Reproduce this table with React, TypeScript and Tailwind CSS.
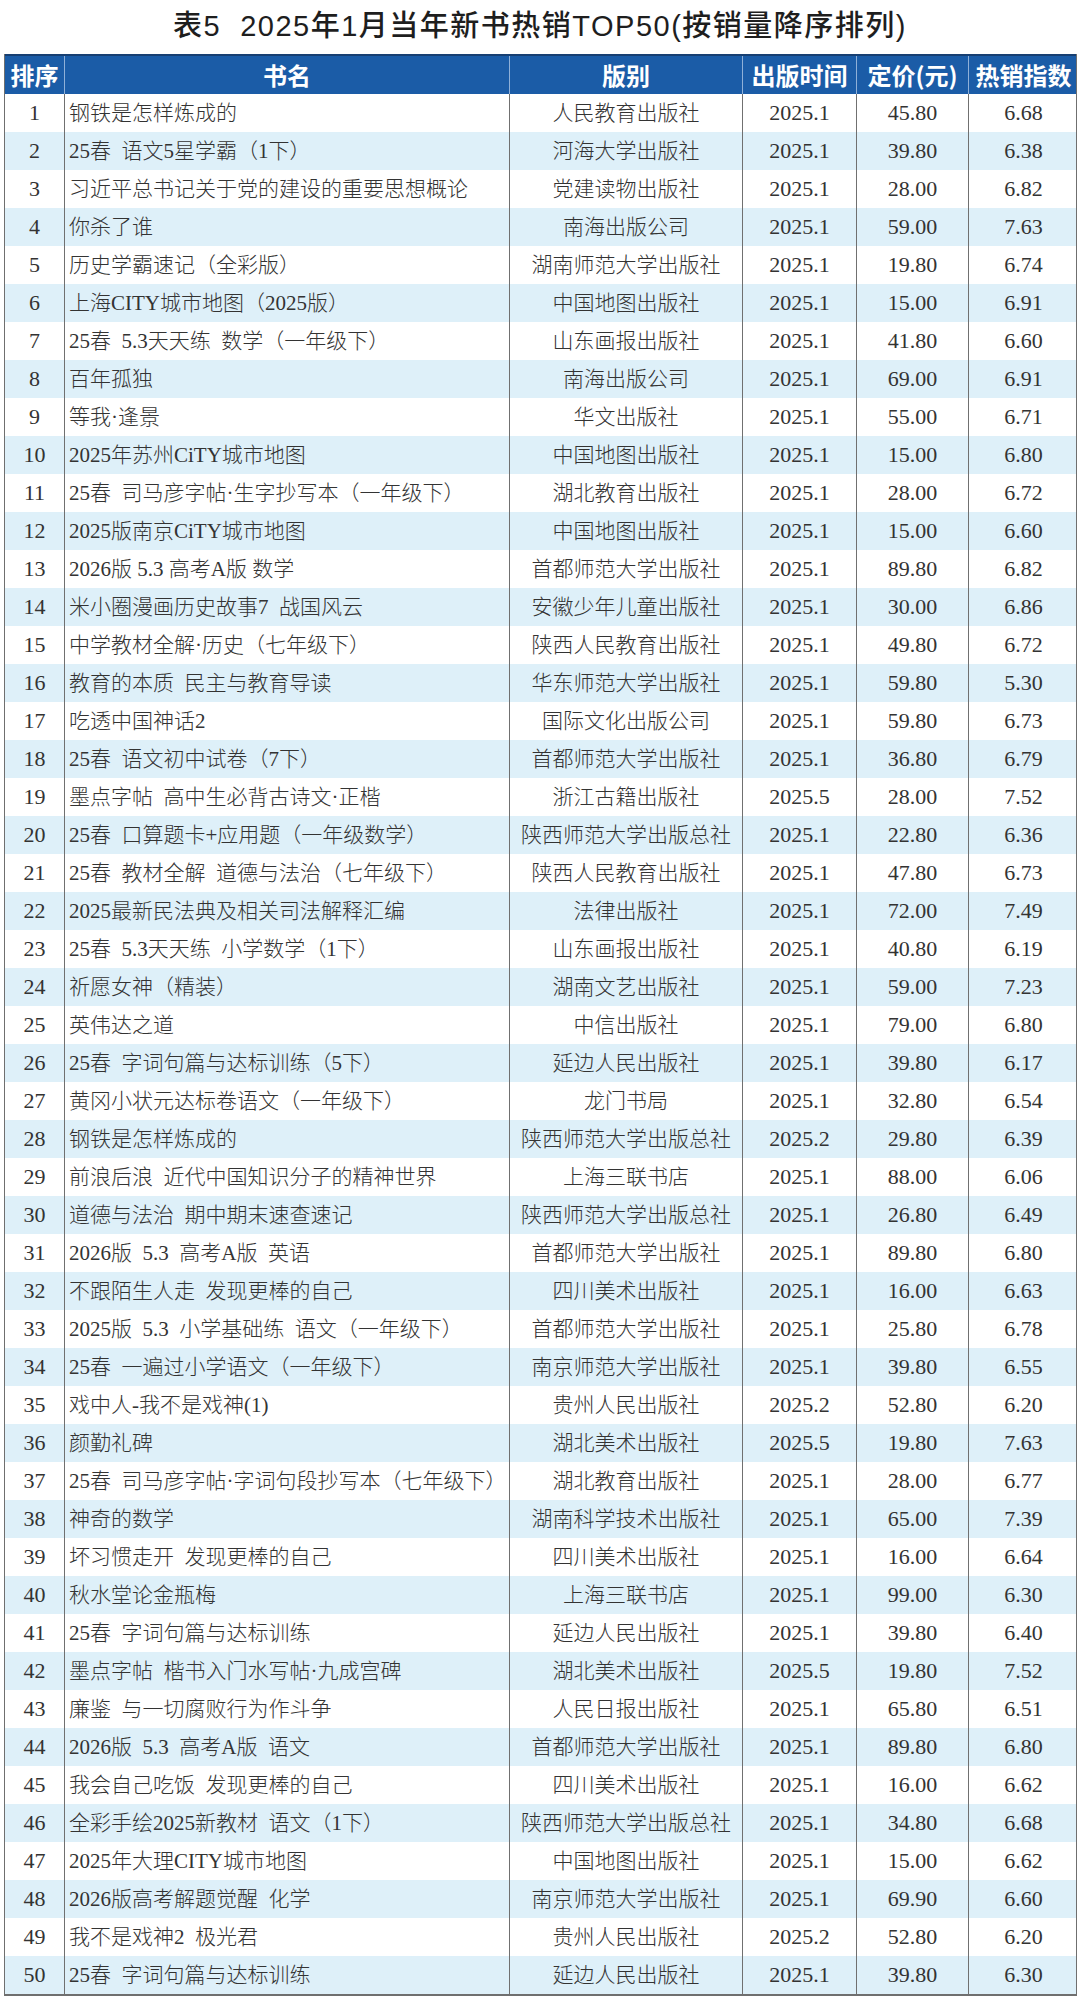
import React from 'react';

type Row = [string, string, string, string, string];

const rows: Row[] = [
  ['钢铁是怎样炼成的', '人民教育出版社', '2025.1', '45.80', '6.68'],
  ['25春  语文5星学霸（1下）', '河海大学出版社', '2025.1', '39.80', '6.38'],
  ['习近平总书记关于党的建设的重要思想概论', '党建读物出版社', '2025.1', '28.00', '6.82'],
  ['你杀了谁', '南海出版公司', '2025.1', '59.00', '7.63'],
  ['历史学霸速记（全彩版）', '湖南师范大学出版社', '2025.1', '19.80', '6.74'],
  ['上海CITY城市地图（2025版）', '中国地图出版社', '2025.1', '15.00', '6.91'],
  ['25春  5.3天天练  数学（一年级下）', '山东画报出版社', '2025.1', '41.80', '6.60'],
  ['百年孤独', '南海出版公司', '2025.1', '69.00', '6.91'],
  ['等我·逢景', '华文出版社', '2025.1', '55.00', '6.71'],
  ['2025年苏州CiTY城市地图', '中国地图出版社', '2025.1', '15.00', '6.80'],
  ['25春  司马彦字帖·生字抄写本（一年级下）', '湖北教育出版社', '2025.1', '28.00', '6.72'],
  ['2025版南京CiTY城市地图', '中国地图出版社', '2025.1', '15.00', '6.60'],
  ['2026版 5.3 高考A版 数学', '首都师范大学出版社', '2025.1', '89.80', '6.82'],
  ['米小圈漫画历史故事7  战国风云', '安徽少年儿童出版社', '2025.1', '30.00', '6.86'],
  ['中学教材全解·历史（七年级下）', '陕西人民教育出版社', '2025.1', '49.80', '6.72'],
  ['教育的本质  民主与教育导读', '华东师范大学出版社', '2025.1', '59.80', '5.30'],
  ['吃透中国神话2', '国际文化出版公司', '2025.1', '59.80', '6.73'],
  ['25春  语文初中试卷（7下）', '首都师范大学出版社', '2025.1', '36.80', '6.79'],
  ['墨点字帖  高中生必背古诗文·正楷', '浙江古籍出版社', '2025.5', '28.00', '7.52'],
  ['25春  口算题卡+应用题（一年级数学）', '陕西师范大学出版总社', '2025.1', '22.80', '6.36'],
  ['25春  教材全解  道德与法治（七年级下）', '陕西人民教育出版社', '2025.1', '47.80', '6.73'],
  ['2025最新民法典及相关司法解释汇编', '法律出版社', '2025.1', '72.00', '7.49'],
  ['25春  5.3天天练  小学数学（1下）', '山东画报出版社', '2025.1', '40.80', '6.19'],
  ['祈愿女神（精装）', '湖南文艺出版社', '2025.1', '59.00', '7.23'],
  ['英伟达之道', '中信出版社', '2025.1', '79.00', '6.80'],
  ['25春  字词句篇与达标训练（5下）', '延边人民出版社', '2025.1', '39.80', '6.17'],
  ['黄冈小状元达标卷语文（一年级下）', '龙门书局', '2025.1', '32.80', '6.54'],
  ['钢铁是怎样炼成的', '陕西师范大学出版总社', '2025.2', '29.80', '6.39'],
  ['前浪后浪  近代中国知识分子的精神世界', '上海三联书店', '2025.1', '88.00', '6.06'],
  ['道德与法治  期中期末速查速记', '陕西师范大学出版总社', '2025.1', '26.80', '6.49'],
  ['2026版  5.3  高考A版  英语', '首都师范大学出版社', '2025.1', '89.80', '6.80'],
  ['不跟陌生人走  发现更棒的自己', '四川美术出版社', '2025.1', '16.00', '6.63'],
  ['2025版  5.3  小学基础练  语文（一年级下）', '首都师范大学出版社', '2025.1', '25.80', '6.78'],
  ['25春  一遍过小学语文（一年级下）', '南京师范大学出版社', '2025.1', '39.80', '6.55'],
  ['戏中人-我不是戏神(1)', '贵州人民出版社', '2025.2', '52.80', '6.20'],
  ['颜勤礼碑', '湖北美术出版社', '2025.5', '19.80', '7.63'],
  ['25春  司马彦字帖·字词句段抄写本（七年级下）', '湖北教育出版社', '2025.1', '28.00', '6.77'],
  ['神奇的数学', '湖南科学技术出版社', '2025.1', '65.00', '7.39'],
  ['坏习惯走开  发现更棒的自己', '四川美术出版社', '2025.1', '16.00', '6.64'],
  ['秋水堂论金瓶梅', '上海三联书店', '2025.1', '99.00', '6.30'],
  ['25春  字词句篇与达标训练', '延边人民出版社', '2025.1', '39.80', '6.40'],
  ['墨点字帖  楷书入门水写帖·九成宫碑', '湖北美术出版社', '2025.5', '19.80', '7.52'],
  ['廉鉴  与一切腐败行为作斗争', '人民日报出版社', '2025.1', '65.80', '6.51'],
  ['2026版  5.3  高考A版  语文', '首都师范大学出版社', '2025.1', '89.80', '6.80'],
  ['我会自己吃饭  发现更棒的自己', '四川美术出版社', '2025.1', '16.00', '6.62'],
  ['全彩手绘2025新教材  语文（1下）', '陕西师范大学出版总社', '2025.1', '34.80', '6.68'],
  ['2025年大理CITY城市地图', '中国地图出版社', '2025.1', '15.00', '6.62'],
  ['2026版高考解题觉醒  化学', '南京师范大学出版社', '2025.1', '69.90', '6.60'],
  ['我不是戏神2  极光君', '贵州人民出版社', '2025.2', '52.80', '6.20'],
  ['25春  字词句篇与达标训练', '延边人民出版社', '2025.1', '39.80', '6.30'],
];

const headers = ['排序', '书名', '版别', '出版时间', '定价(元)', '热销指数'];
const cols = 'grid grid-cols-[59px_445px_233px_114px_112px_110px]';

export default function App() {
  return (
    <div className="w-[1080px] bg-white pb-[4px]">
      {/* Title */}
      <div className="h-[54px] flex items-center justify-center pb-[2px]">
        <h1 className="text-[29px] leading-none font-medium text-[#1e1e1e] tracking-[1.5px] whitespace-pre font-['Liberation_Sans','Noto_Sans_CJK_SC',sans-serif]">
          表5  2025年1月当年新书热销TOP50(按销量降序排列)
        </h1>
      </div>

      <div className="ml-[4px] w-[1073px] border-l-[1.5px] border-r border-b-2 border-[#6f6f6f]">
        {/* Header */}
        <div className={`${cols} h-[40px] bg-[#1b5ca7] border-t-2 border-[#173f72]`}>
          {headers.map((h, i) => (
            <div
              key={h}
              className={`flex items-center justify-center text-white text-[24px] font-bold leading-none font-['Noto_Sans_CJK_SC',sans-serif] ${
                i > 0 ? 'border-l border-[#8fb0d8]' : ''
              }`}
            >
              {h}
            </div>
          ))}
        </div>

        {/* Body */}
        {rows.map((r, idx) => (
          <div
            key={idx}
            className={`${cols} h-[38px] text-[21px] leading-none text-[#333333] font-light font-['Liberation_Serif','Noto_Sans_CJK_SC',serif] ${
              idx % 2 === 1 ? 'bg-[#def0f9]' : 'bg-white'
            }`}
          >
            <div className="flex items-center justify-center text-[22px]">{idx + 1}</div>
            <div className="flex items-center pl-[4px] border-l border-[#707070] whitespace-pre overflow-hidden">
              {r[0]}
            </div>
            <div className="flex items-center justify-center border-l border-[#707070] whitespace-nowrap">
              {r[1]}
            </div>
            <div className="flex items-center justify-center border-l border-[#707070] text-[22px]">{r[2]}</div>
            <div className="flex items-center justify-center border-l border-[#707070] text-[22px]">{r[3]}</div>
            <div className="flex items-center justify-center border-l border-[#707070] text-[22px]">{r[4]}</div>
          </div>
        ))}
      </div>
    </div>
  );
}
